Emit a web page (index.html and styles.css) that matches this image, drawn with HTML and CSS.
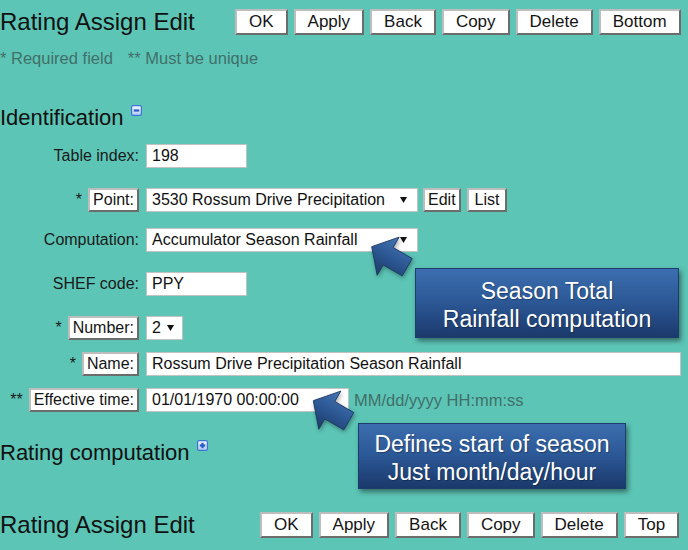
FILE: index.html
```html
<!DOCTYPE html>
<html lang="en">
<head>
<meta charset="utf-8">
<title>Rating Assign Edit</title>
<link rel="stylesheet" href="styles.css">
</head>
<body>
<div class="page">
  <div class="header header-top">
    <h1 class="title">Rating Assign Edit</h1>
    <div class="actions">
      <span class="btn">OK</span>
      <span class="btn">Apply</span>
      <span class="btn">Back</span>
      <span class="btn">Copy</span>
      <span class="btn">Delete</span>
      <span class="btn">Bottom</span>
    </div>
  </div>

  <p class="notes">* Required field<span class="notes-sep"></span>** Must be unique</p>

  <h2 class="section">Identification<svg class="toggle" width="11" height="11" viewBox="0 0 11 11"><defs><linearGradient id="tg1" x1="0" y1="0" x2="0" y2="1"><stop offset="0" stop-color="#f4f8ff"/><stop offset="1" stop-color="#b3ccf4"/></linearGradient></defs><rect x="0.6" y="0.6" width="9.8" height="9.8" rx="1.6" fill="url(#tg1)" stroke="#3d72d8" stroke-width="1.2"/><rect x="2.8" y="4.4" width="5.4" height="2.2" fill="#2a5cc4"/></svg></h2>

  <div class="form">
    <div class="row">
      <div class="label">Table index:</div>
      <div class="field field-short">198</div>
    </div>
    <div class="row row-loose">
      <div class="label"><span class="req">*</span><span class="lbtn">Point:</span></div>
      <div class="field select select-wide">3530 Rossum Drive Precipitation<svg class="caret" width="7" height="6" viewBox="0 0 7 6"><polygon points="0,0 7,0 3.5,6" fill="#111"/></svg></div>
      <span class="lbtn side-btn">Edit</span>
      <span class="lbtn side-btn side-btn-list">List</span>
    </div>
    <div class="row">
      <div class="label">Computation:</div>
      <div class="field select select-wide">Accumulator Season Rainfall<svg class="caret" width="7" height="6" viewBox="0 0 7 6"><polygon points="0,0 7,0 3.5,6" fill="#111"/></svg></div>
    </div>
    <div class="row row-loose">
      <div class="label">SHEF code:</div>
      <div class="field field-short">PPY</div>
    </div>
    <div class="row row-loose">
      <div class="label"><span class="req">*</span><span class="lbtn">Number:</span></div>
      <div class="field select select-small">2<svg class="caret" width="7" height="6" viewBox="0 0 7 6"><polygon points="0,0 7,0 3.5,6" fill="#111"/></svg></div>
    </div>
    <div class="row row-tight">
      <div class="label"><span class="req">*</span><span class="lbtn">Name:</span></div>
      <div class="field field-long">Rossum Drive Precipitation Season Rainfall</div>
    </div>
    <div class="row row-tight">
      <div class="label"><span class="req">**</span><span class="lbtn">Effective time:</span></div>
      <div class="field field-time">01/01/1970 00:00:00</div>
      <span class="hint">MM/dd/yyyy HH:mm:ss</span>
    </div>
  </div>

  <h2 class="section section-rating">Rating computation<svg class="toggle" width="11" height="11" viewBox="0 0 11 11"><defs><linearGradient id="tg2" x1="0" y1="0" x2="0" y2="1"><stop offset="0" stop-color="#f4f8ff"/><stop offset="1" stop-color="#b3ccf4"/></linearGradient></defs><rect x="0.6" y="0.6" width="9.8" height="9.8" rx="1.6" fill="url(#tg2)" stroke="#3d72d8" stroke-width="1.2"/><rect x="2.8" y="4.4" width="5.4" height="2.2" fill="#2a5cc4"/><rect x="4.4" y="2.8" width="2.2" height="5.4" fill="#2a5cc4"/></svg></h2>

  <div class="header header-bottom">
    <h1 class="title">Rating Assign Edit</h1>
    <div class="actions">
      <span class="btn">OK</span>
      <span class="btn">Apply</span>
      <span class="btn">Back</span>
      <span class="btn">Copy</span>
      <span class="btn">Delete</span>
      <span class="btn">Top</span>
    </div>
  </div>
</div>

<svg class="arrow arrow-season" width="60" height="60" viewBox="0 0 60 60">
  <defs>
    <linearGradient id="ag1" x1="0" y1="0" x2="0" y2="1">
      <stop offset="0" stop-color="#4677b6"/>
      <stop offset="0.5" stop-color="#2c5894"/>
      <stop offset="1" stop-color="#1c3a68"/>
    </linearGradient>
  </defs>
  <polygon transform="translate(11.7,21.7) rotate(30)" points="0,0 19,-22 19,-10 41,-10 41,10 19,10 19,22" fill="url(#ag1)" stroke="#1a355f" stroke-width="0.8" stroke-linejoin="round"/>
</svg>
<svg class="arrow arrow-time" width="60" height="60" viewBox="0 0 60 60">
  <defs>
    <linearGradient id="ag2" x1="0" y1="0" x2="0" y2="1">
      <stop offset="0" stop-color="#4677b6"/>
      <stop offset="0.5" stop-color="#2c5894"/>
      <stop offset="1" stop-color="#1c3a68"/>
    </linearGradient>
  </defs>
  <polygon transform="translate(11.3,20.7) rotate(30)" points="0,0 19,-22 19,-10 41,-10 41,10 19,10 19,22" fill="url(#ag2)" stroke="#1a355f" stroke-width="0.8" stroke-linejoin="round"/>
</svg>

<div class="callout callout-season">Season Total<br>Rainfall computation</div>
<div class="callout callout-time">Defines start of season<br>Just month/day/hour</div>
</body>
</html>
```

FILE: styles.css
```css
html, body {
  margin: 0;
  padding: 0;
}

body {
  background: #5cc5b6;
  font-family: "Liberation Sans", Arial, sans-serif;
  color: #141414;
  width: 688px;
  height: 550px;
  overflow: hidden;
  position: relative;
}

.page {
  padding-top: 9px;
}

.header {
  display: flex;
  align-items: center;
  height: 26px;
}

.title {
  margin: 0;
  font-size: 24px;
  font-weight: normal;
  line-height: 26px;
  color: #111;
  white-space: nowrap;
}

.header-top .title {
  width: 235px;
}

.header-bottom {
  margin-top: 46px;
}

.header-bottom .title {
  width: 260px;
}

.actions {
  display: flex;
  gap: 6px;
}

.btn {
  box-sizing: border-box;
  height: 26px;
  display: flex;
  align-items: center;
  padding: 0 12px;
  border: 2px solid;
  border-color: #bdbdbd #6c6c6c #6c6c6c #bdbdbd;
  background: #fff;
  font-size: 17px;
  color: #141414;
}

.notes {
  margin: 13px 0 0;
  font-size: 16.5px;
  line-height: 20px;
  color: #41706a;
}

.notes-sep {
  display: inline-block;
  width: 15px;
}

.section {
  margin: 37px 0 0;
  font-size: 22px;
  font-weight: normal;
  line-height: 26px;
  color: #111;
}

.section-rating {
  margin-top: 28px;
}

.toggle {
  margin-left: 7px;
  vertical-align: 9px;
}

.form {
  margin-top: 13px;
}

.row {
  display: flex;
  align-items: center;
  height: 24px;
  margin-top: 16px;
  font-size: 16px;
}

.row:first-child {
  margin-top: 0;
}

.row-loose {
  margin-top: 20px;
}

.row-tight {
  margin-top: 12px;
}

.label {
  width: 139px;
  margin-right: 7px;
  display: flex;
  justify-content: flex-end;
  align-items: center;
  color: #1a1a1a;
  white-space: nowrap;
}

.req {
  margin-right: 6px;
  color: #1a1a1a;
}

.lbtn {
  box-sizing: border-box;
  height: 24px;
  display: flex;
  align-items: center;
  padding: 0 3px;
  border: 2px solid;
  border-color: #bdbdbd #6c6c6c #6c6c6c #bdbdbd;
  background: #fff;
  color: #141414;
  font-size: 16px;
}

.side-btn {
  margin-left: 5px;
}

.side-btn-list {
  margin-left: 6px;
  padding: 0 6px;
}

.field {
  box-sizing: border-box;
  height: 24px;
  display: flex;
  align-items: center;
  padding: 0 5px;
  border: 1px solid #c2c2c2;
  background: #fff;
  color: #111;
  white-space: nowrap;
}

.field-short {
  width: 101px;
}

.field-long {
  width: 535px;
}

.field-time {
  width: 203px;
}

.select {
  justify-content: space-between;
}

.select-wide {
  width: 272px;
  padding-right: 10px;
}

.select-small {
  gap: 6px;
  padding-right: 8px;
}

.caret {
  flex: none;
}

.hint {
  margin-left: 5px;
  font-size: 16.5px;
  color: #41706a;
}

.arrow {
  position: absolute;
  filter: drop-shadow(1px 2px 2px rgba(0, 0, 0, 0.35));
}

.arrow-season {
  left: 360px;
  top: 225px;
}

.arrow-time {
  left: 302px;
  top: 380px;
}

.callout {
  position: absolute;
  box-sizing: border-box;
  background: linear-gradient(to bottom, #3c6eaf 0%, #2b5795 50%, #1b396b 100%);
  border: 1px solid #1f3d6c;
  box-shadow: 2px 3px 5px rgba(0, 0, 0, 0.45);
  color: #fff;
  font-size: 23px;
  line-height: 28px;
  text-align: center;
  text-shadow: 1px 1px 1px rgba(0, 0, 0, 0.3);
}

.callout-season {
  left: 415px;
  top: 268px;
  width: 264px;
  height: 70px;
  padding-top: 8px;
}

.callout-time {
  left: 358px;
  top: 423px;
  width: 268px;
  height: 66px;
  padding-top: 6px;
}
```
